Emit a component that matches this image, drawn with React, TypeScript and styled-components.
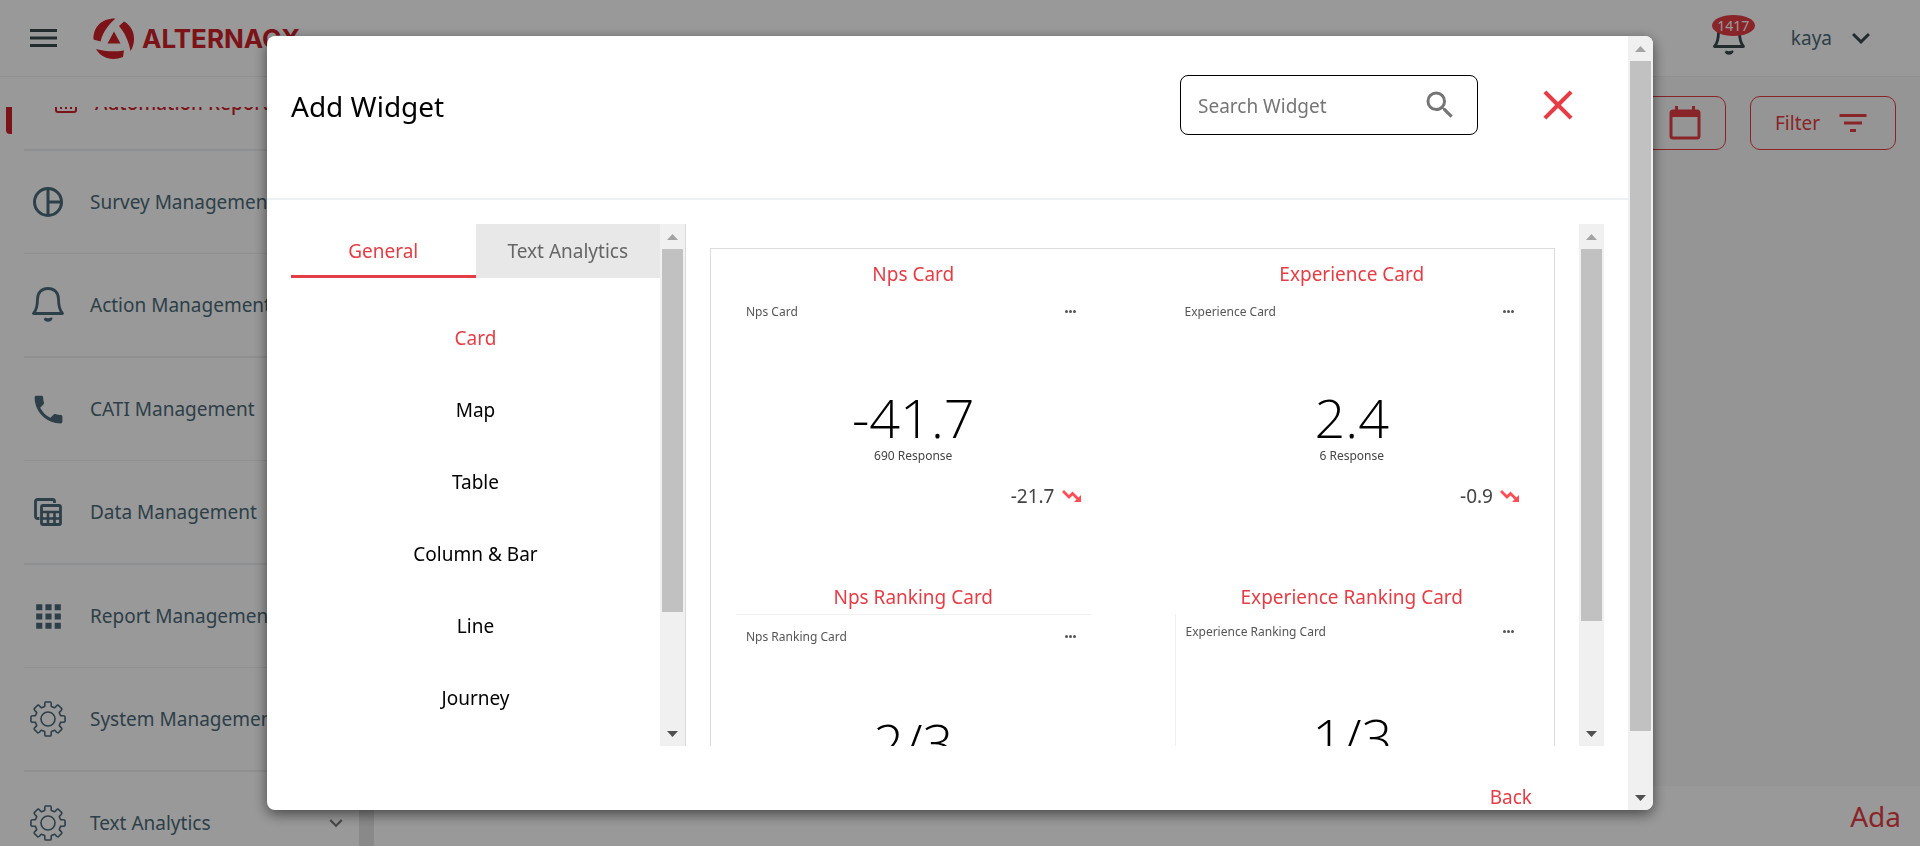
import React from "react";
import styled, { createGlobalStyle, css } from "styled-components";
import { MdPhone, MdSearch, MdFilterList, MdClose, MdKeyboardArrowDown, MdApps } from "react-icons/md";

const red = "#e43d45";
const slate = "#4c6a78";
const ink = "#3a4a4d";

const Global = createGlobalStyle`
  * { box-sizing: border-box; }
  html, body, #root { height: 100%; }
  body {
    margin: 0;
    overflow: hidden;
    font-family: "Noto Sans", "Open Sans", sans-serif;
    font-size: 19px;
    color: #000;
  }
  button, input { font: inherit; color: inherit; }
  button { background: none; border: 0; padding: 0; cursor: pointer; }
  h1, h2, h3, p, ul { margin: 0; padding: 0; font-weight: 400; }
  ul { list-style: none; }
  svg { display: block; flex: none; }
`;

const Page = styled.div`
  height: 100vh;
  display: flex;
  flex-direction: column;
  background: #fff;
`;

const TopBar = styled.header`
  flex: none;
  height: 77px;
  display: flex;
  align-items: center;
  padding: 0 41px 0 30px;
  border-bottom: 1px solid #eceff1;
`;

const MenuButton = styled.button`
  display: flex;
  margin-right: 36px;
  color: ${ink};
`;

const Brand = styled.a`
  display: flex;
  align-items: center;
  gap: 7px;
  padding-top: 2px;
  color: #cd2028;
  font: 700 26px/30px Inter, sans-serif;
  text-decoration: none;
`;

const BarEnd = styled.div`
  margin-left: auto;
  display: flex;
  align-items: center;
`;

const BellButton = styled.button`
  position: relative;
  margin-right: 46px;
  color: ${ink};
`;

const Badge = styled.span`
  position: absolute;
  top: -5px;
  left: -1px;
  width: 43px;
  height: 21px;
  border-radius: 50%;
  background: ${red};
  color: #fff;
  font-size: 14px;
  line-height: 21px;
  text-align: center;
`;

const UserButton = styled.button`
  display: flex;
  align-items: center;
  gap: 11px;
  color: ${slate};
  svg { color: ${ink}; }
`;

const Main = styled.div`
  flex: 1;
  min-height: 0;
  display: flex;
`;

const Sidebar = styled.nav`
  flex: none;
  width: 374px;
  padding-top: 30px;
  display: flex;
`;

const SideScroll = styled.div`
  flex: 1;
  overflow: hidden;
`;

const SideTrack = styled.div`
  width: 15px;
  background: #e4e4e4;
`;

const SideCurrent = styled.a`
  height: 44px;
  display: flex;
  align-items: flex-start;
  margin-left: 24px;
  border-bottom: 2px solid #eceff1;
  color: #cd2028;
  text-decoration: none;
  line-height: 26px;
  white-space: nowrap;
`;

const CurrentMarker = styled.span`
  width: 6px;
  height: 27px;
  margin: 0 43px 0 -18px;
  border-radius: 0 0 0 4px;
  background: #cd2028;
`;

const CurrentLabel = styled.span`
  margin: -17px 0 0 18px;
  font-weight: 500;
`;

const SideItem = styled.a`
  display: grid;
  grid-template-columns: 48px 1fr auto;
  column-gap: 18px;
  align-items: center;
  height: 103px;
  margin-left: 24px;
  padding-right: 10px;
  border-bottom: 1px solid #eceff1;
  color: ${slate};
  text-decoration: none;
  white-space: nowrap;
  li:nth-child(even) > & {
    height: 104px;
    border-bottom-width: 2px;
  }
  svg { justify-self: center; }
`;

const Content = styled.main`
  flex: 1;
  display: flex;
  flex-direction: column;
  background: #f9f9f9;
`;

const Toolbar = styled.div`
  flex: 1;
  display: flex;
  justify-content: flex-end;
  align-items: flex-start;
  gap: 24px;
  padding: 19px 24px;
`;

const OutlineButton = styled.button<{ $wide?: boolean }>`
  height: 54px;
  width: ${(p) => (p.$wide ? 280 : 146)}px;
  display: flex;
  align-items: center;
  justify-content: ${(p) => (p.$wide ? "flex-end" : "space-between")};
  padding: 0 24px;
  border: 1px solid ${red};
  border-radius: 10px;
  color: ${red};
`;

const Footer = styled.footer`
  height: 60px;
  padding: 0 19px;
  background: #fff;
  color: ${red};
  font-size: 28px;
  line-height: 60px;
  text-align: right;
`;

const Backdrop = styled.div`
  position: fixed;
  inset: 0;
  display: flex;
  padding: 36px 267px;
  background: rgba(0, 0, 0, 0.4);
`;

const Dialog = styled.section`
  flex: 1;
  min-width: 0;
  display: flex;
  overflow: hidden;
  border-radius: 8px;
  background: #fff;
  box-shadow: 0 4px 14px rgba(0, 0, 0, 0.55);
`;

const DialogScroll = styled.div`
  flex: 1;
  min-width: 0;
  display: flex;
  flex-direction: column;
  overflow: hidden;
`;

const DialogHead = styled.div`
  flex: none;
  height: 164px;
  display: flex;
  align-items: flex-start;
  padding: 39px 45px 0 24px;
  border-bottom: 2px solid #edf1f4;
`;

const DialogTitle = styled.h1`
  flex: 1;
  font-size: 28px;
  line-height: 62px;
`;

const SearchBox = styled.label`
  width: 298px;
  height: 60px;
  display: flex;
  align-items: center;
  padding: 0 19px 0 17px;
  border: 1px solid #000;
  border-radius: 8px;
  color: #757575;
`;

const SearchInput = styled.input`
  flex: 1;
  min-width: 0;
  border: 0;
  outline: 0;
  padding: 2px 0 0;
  background: none;
  &::placeholder { color: #757575; opacity: 1; }
`;

const CloseButton = styled.button`
  height: 60px;
  margin-left: 55px;
  color: ${red};
`;

const DialogBody = styled.div`
  flex: 1;
  min-height: 0;
  display: flex;
  padding: 24px 24px 0;
`;

const Categories = styled.aside`
  flex: 0 0 395px;
  display: flex;
  border-right: 1px solid #d9d9d9;
`;

const CategoryPane = styled.div`
  flex: 1;
  overflow: hidden;
`;

const Tabs = styled.div`
  display: flex;
  margin-bottom: 24px;
`;

const Tab = styled.button<{ $active?: boolean }>`
  flex: 1;
  height: 54px;
  padding-top: 3px;
  border-bottom: 3px solid transparent;
  color: #666;
  background: #e8e8e8;
  ${(p) =>
    p.$active &&
    css`
      color: ${red};
      background: #fff;
      border-color: ${red};
    `}
`;

const Category = styled.button<{ $active?: boolean }>`
  display: block;
  width: 100%;
  height: 72px;
  color: ${(p) => (p.$active ? red : "#000")};
`;

const Gallery = styled.div`
  flex: 1;
  min-width: 0;
  display: flex;
`;

const GalleryPane = styled.div`
  flex: 1;
  min-width: 0;
  padding: 24px 24px 0;
  overflow: hidden;
`;

const GalleryGrid = styled.div`
  display: grid;
  grid-template-columns: 1fr 1fr;
  grid-auto-rows: 323px;
  column-gap: 84px;
  padding: 0 25px;
  border: 1px solid #dcdcdc;
`;

const Widget = styled.article`
  display: flex;
  flex-direction: column;
`;

const WidgetName = styled.h2`
  height: 42px;
  padding-top: 8px;
  color: ${red};
  font-size: 19px;
  line-height: 34px;
  text-align: center;
`;

const Preview = styled.div<{ $top: number; $edge?: "top" | "left" }>`
  height: 226px;
  padding: ${(p) => p.$top}px 10px 0;
  border: 0 solid #f0f0f0;
  ${(p) => p.$edge === "top" && css`border-top-width: 1px;`}
  ${(p) => p.$edge === "left" && css`border-left-width: 1px;`}
`;

const PreviewHead = styled.div`
  display: flex;
  justify-content: space-between;
  align-items: center;
  height: 20px;
  padding-right: 5px;
  color: #555;
  font-size: 12px;
`;

const PreviewValue = styled.p`
  height: 60px;
  margin-top: 66px;
  font: 300 54px/60px "Open Sans", sans-serif;
  text-align: center;
`;

const PreviewCount = styled.p`
  color: #444;
  font-size: 12px;
  line-height: 18px;
  text-align: center;
`;

const PreviewTrend = styled.p`
  display: flex;
  justify-content: flex-end;
  align-items: center;
  gap: 7px;
  margin-top: 17px;
  color: #444;
  line-height: 28px;
`;

const DialogFoot = styled.div`
  flex: none;
  height: 64px;
  display: flex;
  justify-content: flex-end;
  align-items: flex-end;
  padding: 0 96px 0 24px;
  color: ${red};
`;

const Bar = styled.div`
  flex: none;
  width: 25px;
  display: flex;
  flex-direction: column;
  background: #f0f0f0;
`;

const BarArrow = styled.div<{ $down?: boolean }>`
  height: 25px;
  display: flex;
  align-items: center;
  justify-content: center;
  color: ${(p) => (p.$down ? "#505050" : "#a3a3a3")};
`;

const BarThumb = styled.div<{ $size: number }>`
  flex: ${(p) => p.$size} 0 0;
  margin: 0 2px;
  background: #c1c1c1;
`;

const BarRest = styled.div<{ $size: number }>`
  flex: ${(p) => p.$size} 0 0;
`;

function Scrollbar({ shown, total }: { shown: number; total: number }) {
  return (
    <Bar aria-hidden="true">
      <BarArrow>
        <svg width="11" height="6" viewBox="0 0 11 6"><path d="M0 6L5.5 0L11 6Z" fill="currentColor" /></svg>
      </BarArrow>
      <BarThumb $size={shown} />
      <BarRest $size={total - shown} />
      <BarArrow $down>
        <svg width="11" height="6" viewBox="0 0 11 6"><path d="M0 0L5.5 6L11 0Z" fill="currentColor" /></svg>
      </BarArrow>
    </Bar>
  );
}

const Hamburger = () => (
  <svg width="27" height="18" viewBox="0 0 27 18" fill="currentColor">
    <path d="M0 0h27v3H0zM0 7.500h27v3H0zM0 15h27v3H0z" />
  </svg>
);

const LogoMark = () => (
  <svg width="42" height="42" viewBox="0 0 42 42" fill="currentColor">
    <path d="M22.500 .5C9 0 0 9 .5 21.500L7.500 23.500C10 14 15 7 22.500 .5Z" />
    <path d="M31 3.500L26 8C32 15 35.500 23 37.500 33C43 25 43 10 31 3.500Z" />
    <path d="M3 31C8 40 19 43.500 30 39L31 32.500C21 34 12 33.500 3 31Z" />
    <path d="M21 13.500L27.500 25.500H14.500Z" />
  </svg>
);

const Bell = ({ size }: { size: number }) => (
  <svg width={size} height={(size * 36) / 32} viewBox="0 0 32 36" fill="none" stroke="currentColor" strokeWidth="2.8" strokeLinejoin="round">
    <path d="M1.500 26.500H30.500C27 22.500 26.500 18.500 26.500 12C26.500 5.500 22 1.500 16 1.500S5.500 5.500 5.500 12C5.500 18.500 5 22.500 1.500 26.500Z" />
    <path d="M12.500 31.500C13.500 34.500 18.500 34.500 19.500 31.500Q16 33 12.500 31.500" strokeWidth="2" />
  </svg>
);

const Pie = () => (
  <svg width="30" height="30" viewBox="0 0 30 30" fill="none" stroke="currentColor" strokeWidth="3">
    <circle cx="15" cy="15" r="13.500" />
    <path d="M15 1.500V28.500M15 15H28.500" />
  </svg>
);

const Tables = () => (
  <svg width="28" height="28" viewBox="0 0 28 28" fill="none" stroke="currentColor" strokeWidth="2.800">
    <path d="M5.500 20.500H3.500A2 2 0 0 1 1.500 18.500V3.500A2 2 0 0 1 3.500 1.500H18.500A2 2 0 0 1 20.500 3.500V5" />
    <rect x="7.500" y="7.500" width="19" height="19" rx="1.500" />
    <path d="M7 14H27M7 20.500H27M14 14V27M20.500 14V27" strokeWidth="2.600" />
  </svg>
);

const toothAngles = [0, 45, 90, 135, 180, 225, 270, 315];
const gearPath =
  toothAngles
    .map((deg, i) => {
      const at = (r: number, a: number) => {
        const t = ((deg + a - 90) * Math.PI) / 180;
        return `${(18 + r * Math.cos(t)).toFixed(2)} ${(18 + r * Math.sin(t)).toFixed(2)}`;
      };
      return `${i ? "L" : "M"}${at(13, -15)}Q${at(13.8, -13)} ${at(15.5, -12)}Q${at(17.2, -11)} ${at(17.2, -8)}L${at(17.2, 8)}Q${at(17.2, 11)} ${at(15.5, 12)}Q${at(13.8, 13)} ${at(13, 15)}`;
    })
    .join("") + "Z";

const Gear = () => (
  <svg width="36" height="36" viewBox="0 0 36 36" fill="none" stroke="currentColor" strokeWidth="1.600" strokeLinejoin="round">
    <path d={gearPath} />
    <circle cx="18" cy="18" r="7" />
  </svg>
);

const ReportBox = () => (
  <svg width="22" height="6" viewBox="0 0 22 6" fill="none" stroke="currentColor" strokeWidth="2">
    <path d="M1 0V3Q1 5 3 5H19Q21 5 21 3V0M5 1H7M10 1H12M15 1H17" />
  </svg>
);

const Calendar = () => (
  <svg width="32" height="34" viewBox="0 0 32 34" fill="none" stroke="currentColor">
    <rect x="2" y="5" width="28" height="27" rx="2" strokeWidth="3" />
    <path d="M1 8H31" strokeWidth="6" />
    <path d="M7.500 0V5M24.500 0V5" strokeWidth="3" />
  </svg>
);

const Dots = () => (
  <svg width="11" height="3" viewBox="0 0 11 3" fill="currentColor">
    <circle cx="1.500" cy="1.500" r="1.500" />
    <circle cx="5.500" cy="1.500" r="1.500" />
    <circle cx="9.500" cy="1.500" r="1.500" />
  </svg>
);

const TrendDown = () => (
  <svg width="19" height="12" viewBox="0 0 19 12" fill="none" stroke="#ff4d55" strokeWidth="2.800">
    <path d="M1 1L7 7L10.500 3.500L16.500 9.500" />
    <path d="M12 12H19V5Z" fill="#ff4d55" stroke="none" />
  </svg>
);

const sections = [
  { label: "Survey Management", icon: <Pie /> },
  { label: "Action Management", icon: <Bell size={32} /> },
  { label: "CATI Management", icon: <MdPhone size={37} /> },
  { label: "Data Management", icon: <Tables /> },
  { label: "Report Management", icon: <MdApps size={37} /> },
  { label: "System Management", icon: <Gear /> },
  { label: "Text Analytics", icon: <Gear />, open: true },
];

const categories = ["Card", "Map", "Table", "Column & Bar", "Line", "Journey"];

type WidgetData = {
  name: string;
  value: string;
  count?: string;
  trend?: string;
  top: number;
  edge?: "top" | "left";
};

const widgets: WidgetData[] = [
  { name: "Nps Card", value: "-41.7", count: "690 Response", trend: "-21.7", top: 10 },
  { name: "Experience Card", value: "2.4", count: "6 Response", trend: "-0.9", top: 10 },
  { name: "Nps Ranking Card", value: "2/3", top: 11, edge: "top" },
  { name: "Experience Ranking Card", value: "1/3", top: 7, edge: "left" },
];

export default function App() {
  return (
    <>
      <Global />
      <Page>
        <TopBar>
          <MenuButton aria-label="Menu"><Hamburger /></MenuButton>
          <Brand href="#"><LogoMark />ALTERNACX</Brand>
          <BarEnd>
            <BellButton aria-label="Notifications">
              <Bell size={32} />
              <Badge>1417</Badge>
            </BellButton>
            <UserButton>kaya<MdKeyboardArrowDown size={36} /></UserButton>
          </BarEnd>
        </TopBar>
        <Main>
          <Sidebar>
            <SideScroll>
              <SideCurrent href="#">
                <CurrentMarker />
                <ReportBox />
                <CurrentLabel>Automation Reports</CurrentLabel>
              </SideCurrent>
              <ul>
                {sections.map((s) => (
                  <li key={s.label}>
                    <SideItem href="#">
                      {s.icon}
                      {s.label}
                      {s.open && <MdKeyboardArrowDown size={26} color="#777" />}
                    </SideItem>
                  </li>
                ))}
              </ul>
            </SideScroll>
            <SideTrack />
          </Sidebar>
          <Content>
            <Toolbar>
              <OutlineButton $wide aria-label="Date range"><Calendar /></OutlineButton>
              <OutlineButton>Filter<MdFilterList size={36} /></OutlineButton>
            </Toolbar>
            <Footer>Ada</Footer>
          </Content>
        </Main>
      </Page>
      <Backdrop>
        <Dialog role="dialog" aria-modal="true" aria-label="Add Widget">
          <DialogScroll>
            <DialogHead>
              <DialogTitle>Add Widget</DialogTitle>
              <SearchBox>
                <SearchInput type="text" placeholder="Search Widget" aria-label="Search Widget" />
                <MdSearch size={36} />
              </SearchBox>
              <CloseButton aria-label="Close"><MdClose size={50} /></CloseButton>
            </DialogHead>
            <DialogBody>
              <Categories>
                <CategoryPane>
                  <Tabs role="tablist">
                    <Tab role="tab" aria-selected="true" $active>General</Tab>
                    <Tab role="tab" aria-selected="false">Text Analytics</Tab>
                  </Tabs>
                  {categories.map((c, i) => (
                    <Category key={c} $active={i === 0}>{c}</Category>
                  ))}
                </CategoryPane>
                <Scrollbar shown={522} total={678} />
              </Categories>
              <Gallery>
                <GalleryPane>
                  <GalleryGrid>
                    {widgets.map((w) => (
                      <Widget key={w.name}>
                        <WidgetName>{w.name}</WidgetName>
                        <Preview $top={w.top} $edge={w.edge}>
                          <PreviewHead>{w.name}<Dots /></PreviewHead>
                          <PreviewValue>{w.value}</PreviewValue>
                          {w.count && <PreviewCount>{w.count}</PreviewCount>}
                          {w.trend && <PreviewTrend>{w.trend}<TrendDown /></PreviewTrend>}
                        </Preview>
                      </Widget>
                    ))}
                  </GalleryGrid>
                </GalleryPane>
                <Scrollbar shown={522} total={662} />
              </Gallery>
            </DialogBody>
            <DialogFoot><button>Back</button></DialogFoot>
          </DialogScroll>
          <Scrollbar shown={774} total={836} />
        </Dialog>
      </Backdrop>
    </>
  );
}
